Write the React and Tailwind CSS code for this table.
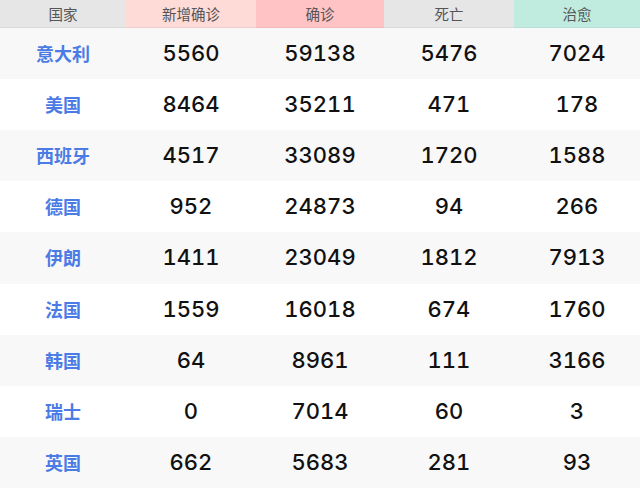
const rows = [
  ["意大利", "5560", "59138", "5476", "7024"],
  ["美国", "8464", "35211", "471", "178"],
  ["西班牙", "4517", "33089", "1720", "1588"],
  ["德国", "952", "24873", "94", "266"],
  ["伊朗", "1411", "23049", "1812", "7913"],
  ["法国", "1559", "16018", "674", "1760"],
  ["韩国", "64", "8961", "111", "3166"],
  ["瑞士", "0", "7014", "60", "3"],
  ["英国", "662", "5683", "281", "93"],
];

const headers = [
  { label: "国家", bg: "bg-[#e6e6e6]" },
  { label: "新增确诊", bg: "bg-[#ffdbd8]" },
  { label: "确诊", bg: "bg-[#ffc3c5]" },
  { label: "死亡", bg: "bg-[#e6e6e6]" },
  { label: "治愈", bg: "bg-[#c0ecdf]" },
];

const App = () => {
  return (
    <div className="w-[640px] h-[488px] bg-white grid grid-cols-[126px_130px_128px_130px_126px] grid-rows-[28px_repeat(9,1fr)] font-['Noto_Sans_CJK_SC',sans-serif]">
      {headers.map((h) => (
        <div
          key={h.label}
          className={`${h.bg} flex items-center justify-center text-[14.5px] text-[#555] border-b border-black/5`}
        >
          {h.label}
        </div>
      ))}
      {rows.map((r, i) => {
        const bg = i % 2 === 0 ? "bg-[#f8f8f8]" : "bg-white";
        return r.map((cell, j) =>
          j === 0 ? (
            <div
              key={`${i}-${j}`}
              className={`${bg} flex items-center justify-center text-[18px] font-bold text-[#4b7be5]`}
            >
              {cell}
            </div>
          ) : (
            <div
              key={`${i}-${j}`}
              className={`${bg} flex items-center justify-center text-[22px] font-medium text-[#111] tabular-nums font-['Inter',sans-serif]`}
            >
              {cell}
            </div>
          )
        );
      })}
    </div>
  );
};

export default App;
